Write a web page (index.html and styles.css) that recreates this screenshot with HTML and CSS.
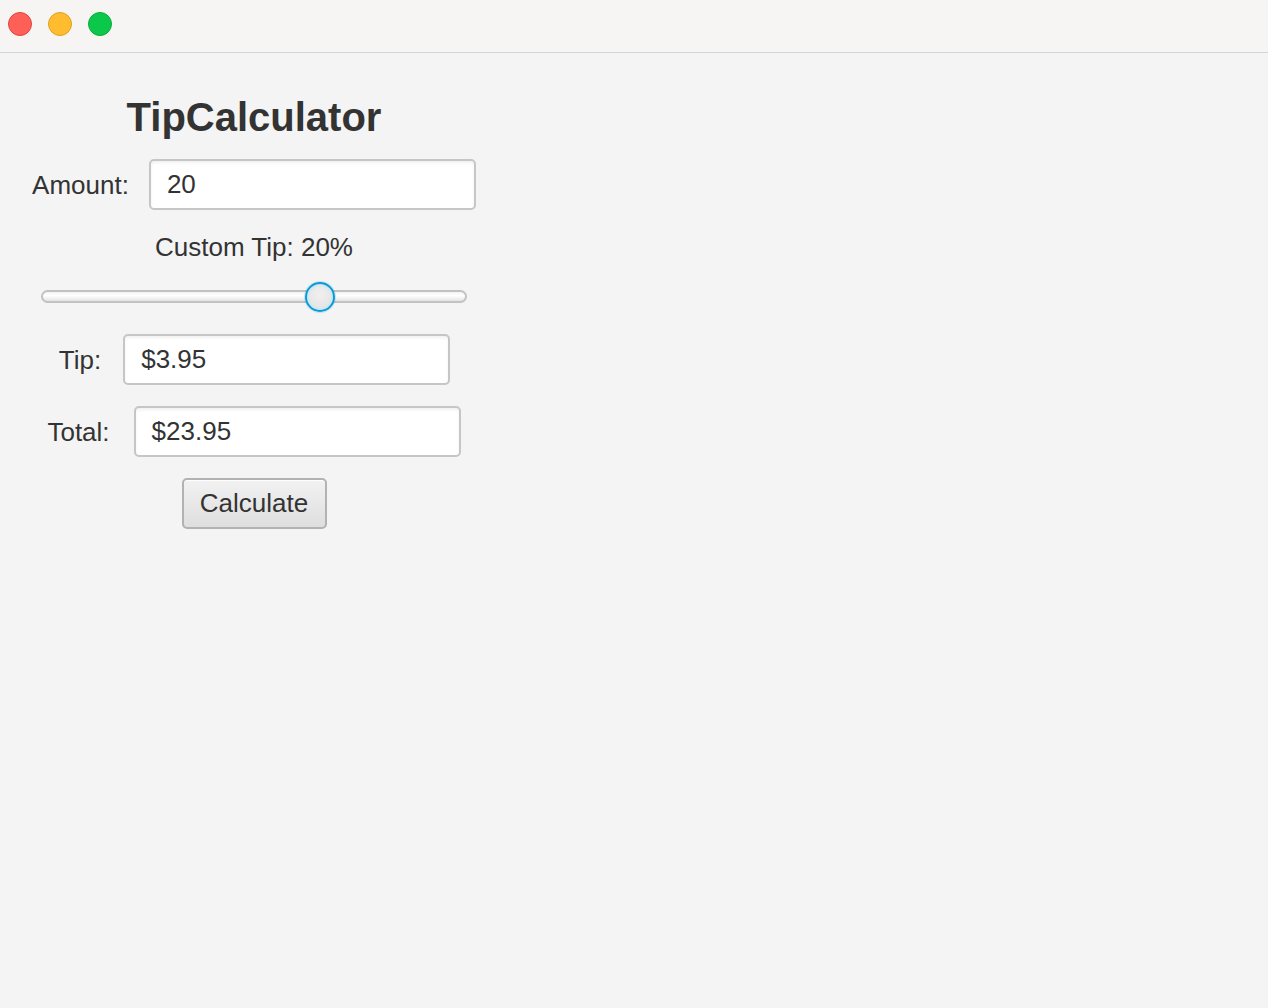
FILE: index.html
```html
<!DOCTYPE html>
<html>
<head>
<meta charset="utf-8">
<link rel="stylesheet" href="styles.css">
</head>
<body>
<div class="window">
  <div class="titlebar">
    <span class="light red"></span>
    <span class="light yellow"></span>
    <span class="light green"></span>
  </div>
  <div class="content">
    <div class="column">
      <h1 class="title">TipCalculator</h1>
      <div class="row">
        <label class="label">Amount:</label>
        <div class="field">20</div>
      </div>
      <div class="caption">Custom Tip: 20%</div>
      <div class="slider">
        <div class="track"></div>
        <div class="thumb" style="left: 264px"></div>
      </div>
      <div class="row row-tip">
        <label class="label">Tip:</label>
        <div class="field">$3.95</div>
      </div>
      <div class="row row-total">
        <label class="label">Total:</label>
        <div class="field">$23.95</div>
      </div>
      <button class="button">Calculate</button>
    </div>
  </div>
</div>
</body>
</html>
```
FILE: styles.css
```css
html, body {
  margin: 0;
  padding: 0;
  height: 100%;
  background: #f4f4f4;
  font-family: "Liberation Sans", Arial, sans-serif;
  color: #333333;
}
.window {
  display: flex;
  flex-direction: column;
  height: 100%;
}
.titlebar {
  flex: none;
  height: 53px;
  background: #f6f5f4;
  border-bottom: 1px solid #d4d4d4;
  display: flex;
  align-items: flex-start;
  gap: 16px;
  padding-left: 8px;
  padding-top: 12px;
  box-sizing: border-box;
}
.light {
  width: 24px;
  height: 24px;
  border-radius: 50%;
  box-sizing: border-box;
}
.red { background: #fe5f57; border: 1px solid #e0443e; }
.yellow { background: #febc2e; border: 1px solid #dea123; }
.green { background: #0bc84a; border: 1px solid #0aab3b; }
.content {
  flex: 1;
  background: #f4f4f4;
}
.column {
  width: 508px;
  display: flex;
  flex-direction: column;
  align-items: center;
  padding-top: 41px;
}
.title {
  margin: 0;
  font-size: 40px;
  font-weight: bold;
  line-height: 46px;
  color: #333333;
}
.row {
  display: flex;
  align-items: center;
  gap: 20px;
  margin-top: 19px;
}
.row-tip { margin-top: 22px; gap: 22px; margin-left: 1px; }
.row-total { margin-top: 21px; gap: 24px; }
.label {
  font-size: 26px;
  line-height: 30px;
  color: #333333;
}
.field {
  width: 327px;
  height: 51px;
  box-sizing: border-box;
  background: #ffffff;
  border: 2px solid #c6c6c6;
  border-radius: 5px;
  box-shadow: inset 0 2px 3px rgba(0,0,0,0.06);
  font-size: 26px;
  line-height: 47px;
  padding-left: 16px;
  color: #333333;
}
.caption {
  margin-top: 21px;
  font-size: 26px;
  line-height: 32px;
}
.slider {
  position: relative;
  width: 426px;
  height: 30px;
  margin-top: 19px;
  margin-left: -1px;
}
.track {
  position: absolute;
  left: 0;
  right: 0;
  top: 8px;
  height: 13px;
  box-sizing: border-box;
  border: 2px solid #c2c2c2;
  border-radius: 7px;
  background: linear-gradient(#f2f2f2, #ffffff 40%, #e4e4e4);
}
.thumb {
  position: absolute;
  top: 0;
  width: 30px;
  height: 30px;
  box-sizing: border-box;
  border-radius: 50%;
  border: 2px solid #0a9ad6;
  background: radial-gradient(circle at 50% 40%, #f0f0f0, #e0e0e0);
  box-shadow: 0 0 0 1px rgba(10,154,214,0.2), inset 0 0 0 2px #cfe8f4;
}
.button {
  margin-top: 21px;
  width: 145px;
  height: 51px;
  box-sizing: border-box;
  border: 2px solid #b2b2b2;
  border-radius: 5px;
  background: linear-gradient(#f2f2f2, #dedede);
  box-shadow: inset 0 1px 0 #ffffff;
  font-family: "Liberation Sans", Arial, sans-serif;
  font-size: 26px;
  color: #333333;
  padding: 0;
}
```
